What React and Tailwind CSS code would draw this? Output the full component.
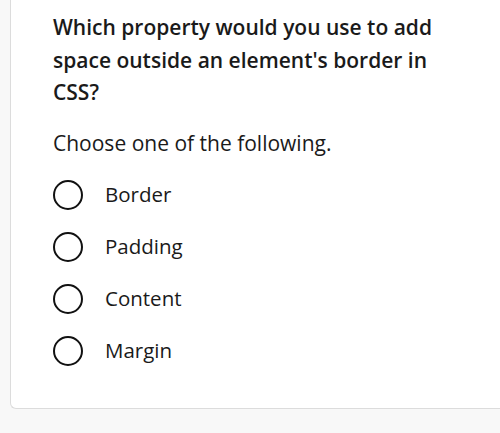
const options = ['Border', 'Padding', 'Content', 'Margin'];

function Radio() {
  return <span className="block w-[30px] h-[30px] rounded-full border-[2.5px] border-[#111] shrink-0" />;
}

export default function App() {
  return (
    <div className="min-h-[433px] bg-[#f8f8f8] pl-[10px] pb-[24px]" style={{ fontFamily: '"Open Sans", sans-serif' }}>
      <div className="bg-white border-l border-b border-[#dcdcdc] rounded-bl-md pl-[42px] pr-[40px] pt-[11px] pb-[31px] text-[#1a1a1a]">
        <h2 className="text-[21px] leading-[32.5px] font-semibold">
          Which property would you use to add space outside an element's border in CSS?
        </h2>
        <p className="mt-[18px] text-[21px] leading-[32px]">Choose one of the following.</p>
        <div className="mt-[10px] flex flex-col">
          {options.map((opt) => (
            <label key={opt} className="h-[52px] flex items-center gap-[22px]">
              <Radio />
              <span className="text-[20.5px]">{opt}</span>
            </label>
          ))}
        </div>
      </div>
    </div>
  );
}
